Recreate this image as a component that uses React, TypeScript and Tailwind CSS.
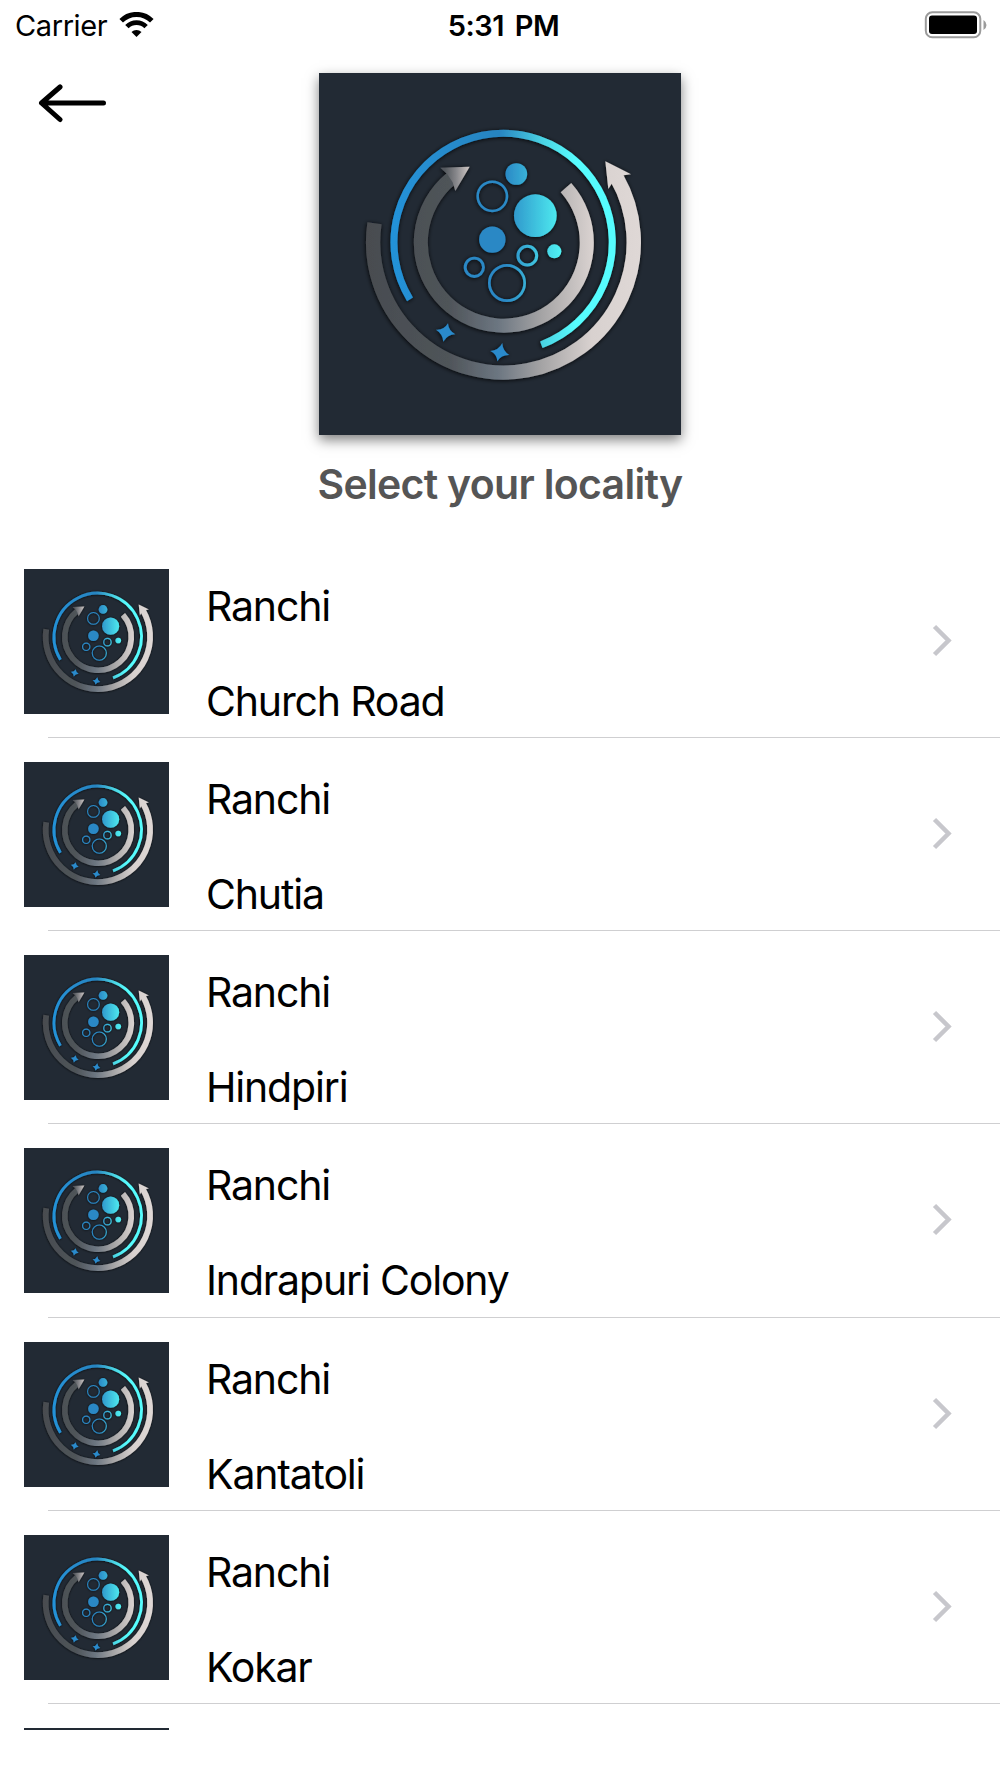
import React, { useId } from 'react';

interface Locality {
  city: string;
  area: string;
}

const localities: Locality[] = [
  { city: 'Ranchi', area: 'Church Road' },
  { city: 'Ranchi', area: 'Chutia' },
  { city: 'Ranchi', area: 'Hindpiri' },
  { city: 'Ranchi', area: 'Indrapuri Colony' },
  { city: 'Ranchi', area: 'Kantatoli' },
  { city: 'Ranchi', area: 'Kokar' },
];

const Logo: React.FC<{ className?: string }> = ({ className }) => {
  const id = useId().replace(/[^a-zA-Z0-9]/g, '');
  const ring = `url(#ring${id})`;
  const dots = `url(#dots${id})`;
  const steel = `url(#steel${id})`;

  return (
    <svg viewBox="27 38 1086 1086" className={className}>
      <defs>
        <linearGradient id={`ring${id}`} gradientUnits="userSpaceOnUse" x1="243" y1="0" x2="919" y2="0">
          <stop offset="0" stopColor="#2492d8" />
          <stop offset="0.48" stopColor="#2884c0" />
          <stop offset="0.68" stopColor="#4bd5e4" />
          <stop offset="0.82" stopColor="#57fcfe" />
          <stop offset="1" stopColor="#57fcfe" />
        </linearGradient>
        <linearGradient id={`dots${id}`} gradientUnits="userSpaceOnUse" x1="585" y1="0" x2="755" y2="0">
          <stop offset="0" stopColor="#2a88c5" />
          <stop offset="1" stopColor="#50f2f3" />
        </linearGradient>
        <linearGradient id={`steel${id}`} gradientUnits="userSpaceOnUse" x1="168" y1="0" x2="993" y2="0">
          <stop offset="0" stopColor="#484c50" />
          <stop offset="0.3" stopColor="#4f5459" />
          <stop offset="0.48" stopColor="#6c7681" />
          <stop offset="0.64" stopColor="#a5a4a5" />
          <stop offset="0.82" stopColor="#d8d1cf" />
          <stop offset="1" stopColor="#dfd8d6" />
        </linearGradient>
        <linearGradient id={`tip${id}`} gradientUnits="userSpaceOnUse" x1="405" y1="0" x2="475" y2="0">
          <stop offset="0" stopColor="#55595e" />
          <stop offset="0.5" stopColor="#89898d" />
          <stop offset="1" stopColor="#c9c2c0" />
        </linearGradient>
        <filter id={`shadow${id}`} x="-10%" y="-10%" width="120%" height="120%">
          <feDropShadow dx="-1" dy="2" stdDeviation="6" floodColor="#000" floodOpacity="0.95" />
        </filter>
      </defs>
      <rect x="27" y="38" width="1086" height="1086" fill="#222a34" />
      <g filter={`url(#shadow${id})`} fill="none">
        {/* outer arrow */}
        <path d="M193.500 489A391 391 0 1 0 920 352" stroke={steel} strokeWidth="43" />
        <path d="M886 303L963 342L941 345L905 370L895 386Z" fill={steel} />
        {/* blue ring */}
        <path d="M300 717A327.500 327.500 0 1 1 694 853" stroke={ring} strokeWidth="21" />
        {/* inner arrow */}
        <path d="M768 382A249 249 0 1 1 424 354" stroke={steel} strokeWidth="42" />
        <path d="M479 319L436 392L428 366L412 342L391 322Z" fill={`url(#tip${id})`} />
      </g>
      <g filter={`url(#shadow${id})`} fill="none">
        <circle cx="619" cy="341" r="32.500" fill={dots} />
        <circle cx="676" cy="466" r="64" fill={dots} />
        <circle cx="547" cy="538" r="39.500" fill={dots} />
        <circle cx="733" cy="573" r="21" fill={dots} />
        <circle cx="547" cy="408" r="44" stroke={dots} strokeWidth="7.500" />
        <circle cx="652" cy="586" r="28" stroke={dots} strokeWidth="9" />
        <circle cx="493" cy="621" r="27.500" stroke={dots} strokeWidth="8.500" />
        <circle cx="591" cy="668" r="53" stroke={dots} strokeWidth="8" />
        <path d="M414 789Q416 812 436 822Q412 823 400 844Q398 820 378 808Q402 810 414 789Z" fill="#2a8acb" />
        <path d="M577 848Q578 872 598 884Q574 883 562 903Q561 881 541 872Q566 870 577 848Z" fill="#2a8acb" />
      </g>
    </svg>
  );
};

const StatusBar = () => (
  <div className="grid h-[51px] grid-cols-3 items-center pl-[15px] pr-[13px] text-[29px]">
    <div className="flex items-center gap-[12px]">
      <span className="tracking-[-0.4px]">Carrier</span>
      <svg width="35" height="25" viewBox="0 0 35 25" className="mb-[3px]">
        <path d="M2.200 8.800A21.500 21.500 0 0 1 32.800 8.800" fill="none" stroke="#000" strokeWidth="5" />
        <path d="M7.900 14.600A13.600 13.600 0 0 1 27.100 14.600" fill="none" stroke="#000" strokeWidth="4.800" />
        <path d="M17.500 25L12.500 20A7.200 7.200 0 0 1 22.500 20Z" />
      </svg>
    </div>
    <span className="pl-[5px] text-center font-semibold tracking-[-0.5px] [word-spacing:4px]">5:31 PM</span>
    <svg width="63" height="28" viewBox="0 0 63 28" className="mb-[2px] justify-self-end">
      <rect x="1.800" y="1.300" width="54.500" height="25" rx="6.500" fill="none" stroke="#9b9b9b" strokeWidth="2" />
      <rect x="5" y="4.500" width="48" height="18.500" rx="3" />
      <path d="M59.500 9Q62.500 11 62.500 14Q62.500 17 59.500 19Z" fill="#9b9b9b" />
    </svg>
  </div>
);

const Thumb = () => <Logo className="size-[145px] shrink-0" />;

const LocalityRow: React.FC<{ item: Locality }> = ({ item }) => (
  <li className="flex h-[193.240px] flex-col">
    <div className="flex flex-1 pl-[24px] pt-[24px]">
      <Thumb />
      <div className="ml-[37px] flex flex-1 flex-col gap-[45px] pt-[12px] text-[41px] leading-[50px] tracking-[-1.17px]">
        <span>{item.city}</span>
        <span>{item.area}</span>
      </div>
      <svg width="21" height="33" viewBox="0 0 21 33" className="mr-[47px] mt-[55px]">
        <path d="M2.500 2.500L16.500 16.500L2.500 30.500" fill="none" stroke="#c7c7cc" strokeWidth="4.500" />
      </svg>
    </div>
    <div className="ml-[48px] h-px bg-[#cfcfd1]" />
  </li>
);

export default function App() {
  return (
    <div className="h-[1778px] w-[1000px] overflow-hidden bg-white font-[Inter,sans-serif] text-black">
      <StatusBar />
      <header className="grid grid-cols-[319px_362px_1fr] pt-[21.500px]">
        <button className="ml-[38px] mt-[10px] h-[40px] w-[70px]">
          <svg width="70" height="40" viewBox="0 0 70 40">
            <path d="M65.500 20H4M22 4L3.500 20L22 36.500" fill="none" stroke="#000" strokeWidth="5" strokeLinecap="round" strokeLinejoin="round" />
          </svg>
        </button>
        <Logo className="size-[362px] shadow-[0_5px_12px_rgba(0,0,0,0.5)]" />
      </header>
      <h1 className="mt-[24.500px] h-[85.600px] text-center text-[41px] font-semibold leading-[50px] tracking-[-0.7px] text-[#555]">
        Select your locality
      </h1>
      <ul className="h-[1185px] overflow-hidden">
        {localities.map((item) => (
          <LocalityRow key={item.area} item={item} />
        ))}
        <li className="pl-[24px] pt-[24px]">
          <Thumb />
        </li>
      </ul>
    </div>
  );
}
